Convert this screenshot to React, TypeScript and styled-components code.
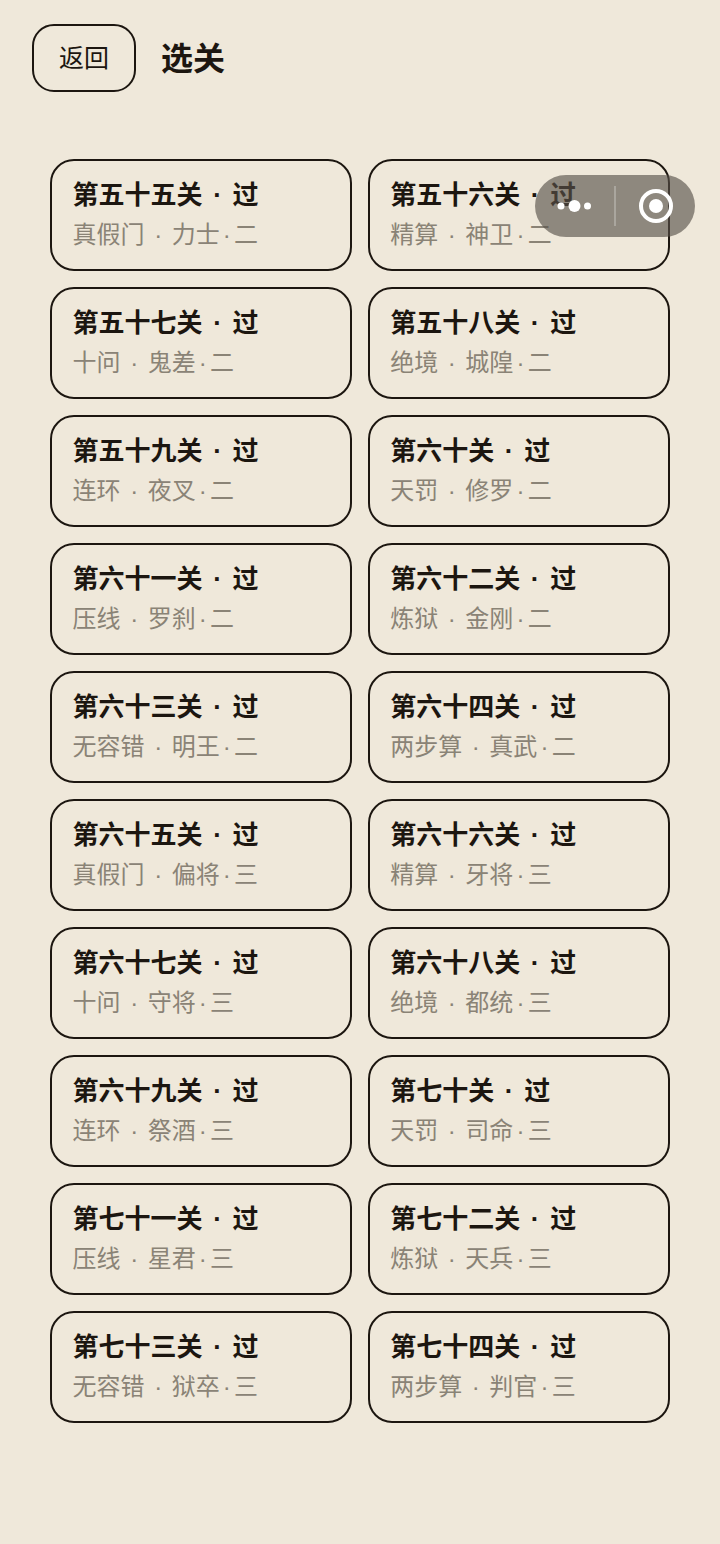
import styled, { createGlobalStyle } from "styled-components";

const GlobalStyle = createGlobalStyle`
    html, body {
        margin: 0;
        padding: 0;
        background: #efe8da;
    }
`;

const Page = styled.div`
    position: relative;
    box-sizing: border-box;
    width: 720px;
    height: 1544px;
    padding: 24px 50px 0 32px;
    background: #efe8da;
    color: #1c1610;
    font-family: "Noto Sans CJK SC", "Noto Sans", sans-serif;
    overflow: hidden;
`;

const Header = styled.header`
    display: flex;
    align-items: center;
    gap: 25px;
`;

const BackButton = styled.button`
    box-sizing: border-box;
    width: 104px;
    height: 68px;
    padding: 0 0 4px;
    border: 2px solid #1c1610;
    border-radius: 22px;
    background: transparent;
    color: #1c1610;
    font-family: inherit;
    font-size: 25px;
`;

const Title = styled.h1`
    margin: -4px 0 0;
    font-size: 32px;
    font-weight: 700;
    line-height: 68px;
`;

const LevelGrid = styled.div`
    display: grid;
    grid-template-columns: 301.6px 301.6px;
    grid-auto-rows: 112px;
    gap: 16px;
    margin: 67px 0 0 18.4px;
`;

const Card = styled.div`
    box-sizing: border-box;
    display: flex;
    flex-direction: column;
    gap: 2px;
    padding: 14px 20.2px 0;
    border: 2px solid #1c1610;
    border-radius: 24px;
`;

const CardTitle = styled.div`
    font-size: 26px;
    font-weight: 700;
    line-height: 36px;
    white-space: pre;
`;

const CardMeta = styled.div`
    font-size: 24px;
    line-height: 36px;
    color: #8a8376;
    white-space: pre;
`;

const Dot = styled.span<{ $width: number }>`
    display: inline-block;
    width: ${(p) => p.$width}em;
    text-align: center;
    font-family: "Liberation Sans", sans-serif;
`;

const MenuCapsule = styled.div`
    position: absolute;
    top: 175px;
    left: 535px;
    display: flex;
    align-items: center;
    width: 160px;
    height: 62px;
    border-radius: 31px;
    background: rgba(88, 82, 74, 0.64);
`;

const CapsuleSide = styled.div`
    flex: 1;
    display: flex;
    align-items: center;
    justify-content: center;
`;

const CapsuleDivider = styled.div`
    width: 2px;
    height: 40px;
    background: rgba(255, 255, 255, 0.25);
`;

const levels: [string, string, string, string][] = [
    ["第五十五关", "真假门", "力士", "二"],
    ["第五十六关", "精算", "神卫", "二"],
    ["第五十七关", "十问", "鬼差", "二"],
    ["第五十八关", "绝境", "城隍", "二"],
    ["第五十九关", "连环", "夜叉", "二"],
    ["第六十关", "天罚", "修罗", "二"],
    ["第六十一关", "压线", "罗刹", "二"],
    ["第六十二关", "炼狱", "金刚", "二"],
    ["第六十三关", "无容错", "明王", "二"],
    ["第六十四关", "两步算", "真武", "二"],
    ["第六十五关", "真假门", "偏将", "三"],
    ["第六十六关", "精算", "牙将", "三"],
    ["第六十七关", "十问", "守将", "三"],
    ["第六十八关", "绝境", "都统", "三"],
    ["第六十九关", "连环", "祭酒", "三"],
    ["第七十关", "天罚", "司命", "三"],
    ["第七十一关", "压线", "星君", "三"],
    ["第七十二关", "炼狱", "天兵", "三"],
    ["第七十三关", "无容错", "狱卒", "三"],
    ["第七十四关", "两步算", "判官", "三"],
];

export default function App() {
    return (
        <Page>
            <GlobalStyle />
            <Header>
                <BackButton>返回</BackButton>
                <Title>选关</Title>
            </Header>
            <LevelGrid>
                {levels.map(([name, rule, role, tier]) => (
                    <Card key={name}>
                        <CardTitle>
                            {name} <Dot $width={0.7}>·</Dot> 过
                        </CardTitle>
                        <CardMeta>
                            {rule} <Dot $width={0.68}>·</Dot> {role}
                            <Dot $width={0.6}>·</Dot>
                            {tier}
                        </CardMeta>
                    </Card>
                ))}
            </LevelGrid>
            <MenuCapsule>
                <CapsuleSide>
                    <svg width="36" height="14" viewBox="0 0 36 14">
                        <circle cx="4" cy="7" r="3.5" fill="#fff" />
                        <circle cx="17.5" cy="7" r="6" fill="#fff" />
                        <circle cx="30.5" cy="7" r="3.5" fill="#fff" />
                    </svg>
                </CapsuleSide>
                <CapsuleDivider />
                <CapsuleSide>
                    <svg width="36" height="36" viewBox="0 0 36 36">
                        <circle cx="18" cy="18" r="15" fill="none" stroke="#fff" strokeWidth="4" />
                        <circle cx="18" cy="18" r="7" fill="#fff" />
                    </svg>
                </CapsuleSide>
            </MenuCapsule>
        </Page>
    );
}
